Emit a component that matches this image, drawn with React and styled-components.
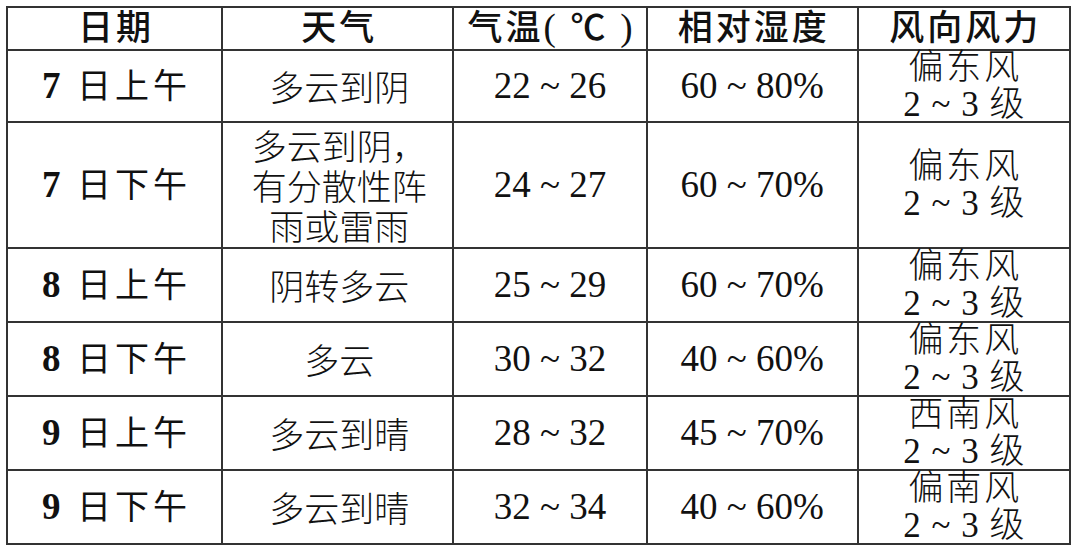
import React from 'react';
import styled, { createGlobalStyle } from 'styled-components';

const GlobalStyle = createGlobalStyle`
  html, body {
    margin: 0;
    padding: 0;
    background: #fff;
  }
  body {
    width: 1080px;
    height: 550px;
    overflow: hidden;
  }
`;

const Page = styled.div`
  padding: 6px 0 0 6px;
`;

const Table = styled.table`
  border-collapse: collapse;
  table-layout: fixed;
  width: 1065px;
  color: #111;
  font-family: "Liberation Serif", "Noto Sans CJK SC", serif;
`;

const Row = styled.tr`
  height: ${p => p.h}px;
`;

const HeadCell = styled.th`
  border: 2px solid #333;
  padding: 0 0 0 3px;
  font-family: "Liberation Serif", "Noto Sans CJK SC", sans-serif;
  font-weight: 500;
  font-size: 35px;
  line-height: 38px;
  letter-spacing: 3px;
  text-align: center;
  vertical-align: middle;
  white-space: nowrap;
`;

const Paren = styled.span`
  font-weight: 400;
  font-size: 37px;
`;

const Cell = styled.td`
  border: 2px solid #333;
  padding: 0;
  text-align: center;
  vertical-align: middle;
  white-space: nowrap;
`;

const DateCell = styled(Cell)`
  font-family: "Liberation Serif", "Noto Sans CJK SC", serif;
  font-size: 34px;
  font-weight: 400;
  letter-spacing: 4px;
  line-height: 40px;
  padding-left: 4px;
`;

const Day = styled.b`
  font-size: 37px;
  font-weight: 700;
`;

const WeatherCell = styled(Cell)`
  font-family: "Noto Sans CJK SC", sans-serif;
  font-size: 35px;
  font-weight: 300;
  line-height: 40px;
  letter-spacing: 3px;
  padding-left: 3px;
`;

const NumCell = styled(Cell)`
  font-family: "Liberation Serif", serif;
  font-size: 37px;
  line-height: 40px;
`;

const WindCell = styled(Cell)`
  font-family: "Liberation Serif", "Noto Sans CJK SC", serif;
  font-size: 35px;
  font-weight: 300;
  line-height: 37px;
`;

const WindBox = styled.div`
  height: 64px;
  display: flex;
  flex-direction: column;
  justify-content: center;
  align-items: center;
`;

const Line = styled.div`
  letter-spacing: ${p => p.ls || 0}px;
  padding-left: ${p => p.ls || 0}px;
`;

const columns = [215, 231, 193, 211, 212];

const rows = [
  { day: '7', part: '日上午', weather: ['多云到阴'], temp: '22 ~ 26', hum: '60 ~ 80%', wind: '偏东风', h: 72 },
  { day: '7', part: '日下午', weather: ['多云到阴，', '有分散性阵', '雨或雷雨'], temp: '24 ~ 27', hum: '60 ~ 70%', wind: '偏东风', h: 126 },
  { day: '8', part: '日上午', weather: ['阴转多云'], temp: '25 ~ 29', hum: '60 ~ 70%', wind: '偏东风', h: 74 },
  { day: '8', part: '日下午', weather: ['多云'], temp: '30 ~ 32', hum: '40 ~ 60%', wind: '偏东风', h: 74 },
  { day: '9', part: '日上午', weather: ['多云到晴'], temp: '28 ~ 32', hum: '45 ~ 70%', wind: '西南风', h: 74 },
  { day: '9', part: '日下午', weather: ['多云到晴'], temp: '32 ~ 34', hum: '40 ~ 60%', wind: '偏南风', h: 74 },
];

export default function App() {
  return (
    <Page>
      <GlobalStyle />
      <Table>
        <colgroup>
          {columns.map((w, i) => <col key={i} style={{ width: w }} />)}
        </colgroup>
        <thead>
          <Row h={43}>
            <HeadCell>日期</HeadCell>
            <HeadCell>天气</HeadCell>
            <HeadCell>气温<Paren>(</Paren> ℃ <Paren>)</Paren></HeadCell>
            <HeadCell>相对湿度</HeadCell>
            <HeadCell>风向风力</HeadCell>
          </Row>
        </thead>
        <tbody>
          {rows.map((r, i) => (
            <Row key={i} h={r.h}>
              <DateCell><Day>{r.day}</Day> {r.part}</DateCell>
              <WeatherCell>
                {r.weather.map((w, j) => <Line key={j}>{w}</Line>)}
              </WeatherCell>
              <NumCell>{r.temp}</NumCell>
              <NumCell>{r.hum}</NumCell>
              <WindCell>
                <WindBox>
                  <Line ls={3}>{r.wind}</Line>
                  <Line ls={1}>2 ~ 3 级</Line>
                </WindBox>
              </WindCell>
            </Row>
          ))}
        </tbody>
      </Table>
    </Page>
  );
}
